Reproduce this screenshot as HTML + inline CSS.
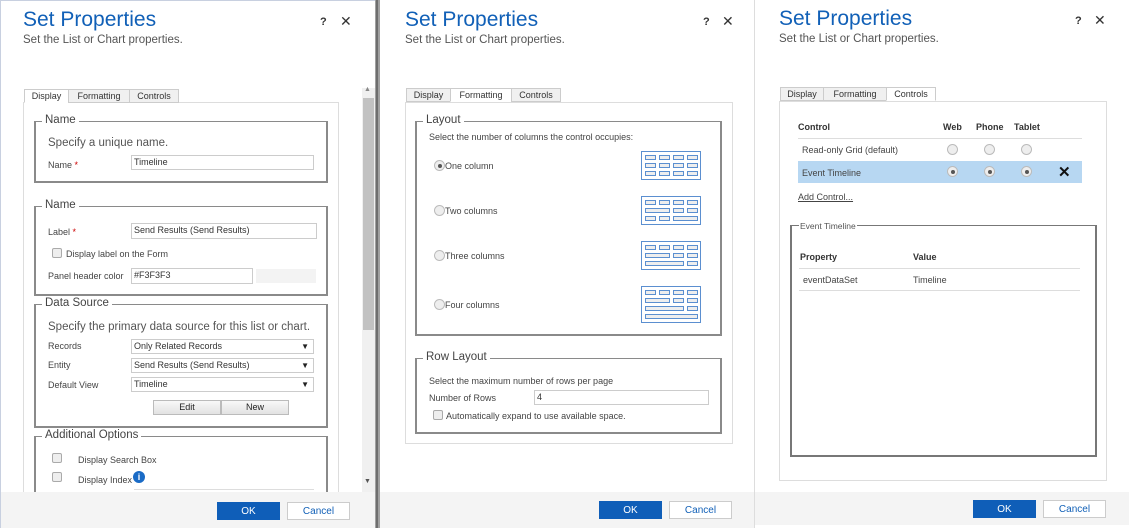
<!DOCTYPE html>
<html><head><meta charset="utf-8"><style>
*{box-sizing:border-box}
body{margin:0;width:1134px;height:528px;position:relative;overflow:hidden;background:#fff;font-family:"Liberation Sans",sans-serif;color:#444}
.a{position:absolute;white-space:nowrap}
.t{font-size:21px;color:#1160b7}
.st{font-size:11.5px;color:#555}
.hx{font-size:11px;color:#333;font-weight:bold}
.tab{position:absolute;height:14px;border:1px solid #ccc;background:#f0f0f0;font-size:9px;color:#333;text-align:center;line-height:12px}
.tab.on{background:#fff;border-bottom-color:#fff}
.box{position:absolute;border:1px solid #ddd;background:#fff}
.fs{position:absolute;border:2px solid #8a8a8a;border-top-width:1px;border-right-width:2px}
.lg{position:absolute;background:#fff;font-size:11.5px;color:#444;padding:0 3px;top:-8px;left:6px}
.s{font-size:9px;color:#444}
.m{font-size:11.5px;color:#555}
.in{position:absolute;border:1px solid #ccc;background:#fff;font-size:9px;color:#333;padding-left:2px;line-height:13px}
.sel::after{content:"▼";position:absolute;right:4px;top:0;font-size:8px;color:#222}
.cb{position:absolute;width:10px;height:10px;border:1px solid #aaa;border-radius:2px;background:#eee}
.rd{position:absolute;width:11px;height:11px;border:1px solid #bbb;border-radius:50%;background:#eee}
.rd.on::after{content:"";position:absolute;left:2.5px;top:2.5px;width:4px;height:4px;border-radius:50%;background:#555}
.foot{position:absolute;top:492px;height:36px;background:#f4f4f4}
.ok,.cn{position:absolute;height:18px;font-size:10px;display:flex;align-items:center;justify-content:center}
.ok{background:#0f5eb8;color:#fff}
.cn{background:#fff;border:1px solid #ccc;color:#1160b7}
.btn{position:absolute;height:15px;border:1px solid #bbb;background:linear-gradient(#f8f8f8,#e2e2e2);font-size:9px;text-align:center;line-height:13px;color:#222}
</style></head><body>
<!-- panel 1 -->
<div class="a" style="left:0;top:0;width:375px;height:1px;background:#c8d0e0"></div>
<div class="a" style="left:0;top:0;width:1px;height:528px;background:#c8d0e0"></div>
<div class="a t" style="left:23px;top:8px">Set Properties</div>
<div class="a st" style="left:23px;top:34px">Set the List or Chart properties.</div>
<div class="a hx" style="left:320px;top:16px">?</div>
<div class="a" style="left:340px;top:13px;font-size:14px;color:#333">✕</div>
<div class="box" style="left:23px;top:102px;width:316px;height:400px"></div>
<div class="tab on" style="left:24px;top:89px;width:45px">Display</div>
<div class="tab" style="left:68px;top:89px;width:62px">Formatting</div>
<div class="tab" style="left:129px;top:89px;width:50px">Controls</div>
<div class="fs" style="left:34px;top:121px;width:294px;height:62px"><span class="lg">Name</span></div>
<div class="a m" style="left:48px;top:137px">Specify a unique name.</div>
<div class="a s" style="left:48px;top:160px">Name <span style="color:#c00">*</span></div>
<div class="in" style="left:131px;top:155px;width:183px;height:15px">Timeline</div>
<div class="fs" style="left:34px;top:206px;width:294px;height:90px"><span class="lg">Name</span></div>
<div class="a s" style="left:48px;top:227px">Label <span style="color:#c00">*</span></div>
<div class="in" style="left:131px;top:223px;width:186px;height:16px">Send Results (Send Results)</div>
<div class="cb" style="left:52px;top:248px"></div>
<div class="a s" style="left:66px;top:249px">Display label on the Form</div>
<div class="a s" style="left:48px;top:271px">Panel header color</div>
<div class="in" style="left:131px;top:268px;width:122px;height:16px">#F3F3F3</div>
<div class="a" style="left:256px;top:269px;width:60px;height:14px;background:#f3f3f3"></div>
<div class="fs" style="left:34px;top:304px;width:294px;height:124px"><span class="lg">Data Source</span></div>
<div class="a m" style="left:48px;top:321px">Specify the primary data source for this list or chart.</div>
<div class="a s" style="left:48px;top:341px">Records</div>
<div class="in sel" style="left:131px;top:339px;width:183px;height:15px">Only Related Records</div>
<div class="a s" style="left:48px;top:360px">Entity</div>
<div class="in sel" style="left:131px;top:358px;width:183px;height:15px">Send Results (Send Results)</div>
<div class="a s" style="left:48px;top:380px">Default View</div>
<div class="in sel" style="left:131px;top:377px;width:183px;height:15px">Timeline</div>
<div class="btn" style="left:153px;top:400px;width:68px">Edit</div>
<div class="btn" style="left:221px;top:400px;width:68px">New</div>
<div class="fs" style="left:34px;top:436px;width:294px;height:70px"><span class="lg">Additional Options</span></div>
<div class="cb" style="left:52px;top:453px"></div>
<div class="a s" style="left:78px;top:455px">Display Search Box</div>
<div class="cb" style="left:52px;top:472px"></div>
<div class="a s" style="left:78px;top:475px">Display Index</div>
<div class="a" style="left:133px;top:471px;width:12px;height:12px;border-radius:50%;background:#1a6bc6;color:#fff;font-size:9px;font-weight:bold;text-align:center;line-height:12px">i</div>
<div class="a" style="left:134px;top:489px;width:180px;height:1px;background:#ddd"></div>
<div class="a" style="left:362px;top:88px;width:13px;height:404px;background:#f0f0f0"></div>
<div class="a" style="left:363px;top:98px;width:11px;height:232px;background:#c2c2c2"></div>
<div class="a" style="left:364px;top:86px;font-size:7px;color:#888">▲</div>
<div class="a" style="left:364px;top:478px;font-size:7px;color:#555">▼</div>
<div class="foot" style="left:1px;width:374px"></div>
<div class="ok" style="left:217px;top:502px;width:63px">OK</div>
<div class="cn" style="left:287px;top:502px;width:63px">Cancel</div>
<!-- divider -->
<div class="a" style="left:375px;top:0;width:5px;height:528px;background:#a0a0a0"></div>
<div class="a" style="left:376px;top:0;width:2px;height:528px;background:#6e6e6e"></div>
<!-- panel 2 -->
<div class="a t" style="left:405px;top:8px">Set Properties</div>
<div class="a st" style="left:405px;top:34px">Set the List or Chart properties.</div>
<div class="a hx" style="left:703px;top:16px">?</div>
<div class="a" style="left:722px;top:13px;font-size:14px;color:#333">✕</div>
<div class="box" style="left:405px;top:102px;width:328px;height:342px"></div>
<div class="tab" style="left:406px;top:88px;width:45px">Display</div>
<div class="tab on" style="left:450px;top:88px;width:62px">Formatting</div>
<div class="tab" style="left:511px;top:88px;width:50px">Controls</div>
<div class="fs" style="left:415px;top:121px;width:307px;height:215px"><span class="lg">Layout</span></div>
<div class="a s" style="left:429px;top:132px">Select the number of columns the control occupies:</div>
<div class="rd on" style="left:434px;top:160px"></div><div class="a s" style="left:445px;top:161px">One column</div>
<div class="rd" style="left:434px;top:205px"></div><div class="a s" style="left:445px;top:206px">Two columns</div>
<div class="rd" style="left:434px;top:250px"></div><div class="a s" style="left:445px;top:251px">Three columns</div>
<div class="rd" style="left:434px;top:299px"></div><div class="a s" style="left:445px;top:300px">Four columns</div>
<svg class="a" style="left:641px;top:151px" width="60" height="172" viewBox="0 0 60 172" fill="none" stroke="#5b8fd0" stroke-width="1">
<rect x="0.5" y="0.5" width="59" height="28"/>
<g fill="#eee"><rect x="4.5" y="4.5" width="10" height="4"/><rect x="18.5" y="4.5" width="10" height="4"/><rect x="32.5" y="4.5" width="10" height="4"/><rect x="46.5" y="4.5" width="10" height="4"/>
<rect x="4.5" y="12.5" width="10" height="4"/><rect x="18.5" y="12.5" width="10" height="4"/><rect x="32.5" y="12.5" width="10" height="4"/><rect x="46.5" y="12.5" width="10" height="4"/>
<rect x="4.5" y="20.5" width="10" height="4"/><rect x="18.5" y="20.5" width="10" height="4"/><rect x="32.5" y="20.5" width="10" height="4"/><rect x="46.5" y="20.5" width="10" height="4"/></g>
<rect x="0.5" y="45.5" width="59" height="28"/>
<g fill="#eee"><rect x="4.5" y="49.5" width="10" height="4"/><rect x="18.5" y="49.5" width="10" height="4"/><rect x="32.5" y="49.5" width="10" height="4"/><rect x="46.5" y="49.5" width="10" height="4"/>
<rect x="4.5" y="57.5" width="24" height="4"/><rect x="32.5" y="57.5" width="10" height="4"/><rect x="46.5" y="57.5" width="10" height="4"/>
<rect x="4.5" y="65.5" width="10" height="4"/><rect x="18.5" y="65.5" width="10" height="4"/><rect x="32.5" y="65.5" width="24" height="4"/></g>
<rect x="0.5" y="90.5" width="59" height="28"/>
<g fill="#eee"><rect x="4.5" y="94.5" width="10" height="4"/><rect x="18.5" y="94.5" width="10" height="4"/><rect x="32.5" y="94.5" width="10" height="4"/><rect x="46.5" y="94.5" width="10" height="4"/>
<rect x="4.5" y="102.5" width="24" height="4"/><rect x="32.5" y="102.5" width="10" height="4"/><rect x="46.5" y="102.5" width="10" height="4"/>
<rect x="4.5" y="110.5" width="38" height="4"/><rect x="46.5" y="110.5" width="10" height="4"/></g>
<rect x="0.5" y="135.5" width="59" height="36"/>
<g fill="#eee"><rect x="4.5" y="139.5" width="10" height="4"/><rect x="18.5" y="139.5" width="10" height="4"/><rect x="32.5" y="139.5" width="10" height="4"/><rect x="46.5" y="139.5" width="10" height="4"/>
<rect x="4.5" y="147.5" width="24" height="4"/><rect x="32.5" y="147.5" width="10" height="4"/><rect x="46.5" y="147.5" width="10" height="4"/>
<rect x="4.5" y="155.5" width="38" height="4"/><rect x="46.5" y="155.5" width="10" height="4"/>
<rect x="4.5" y="163.5" width="52" height="4"/></g>
</svg>
<div class="fs" style="left:415px;top:358px;width:307px;height:76px"><span class="lg">Row Layout</span></div>
<div class="a s" style="left:429px;top:376px">Select the maximum number of rows per page</div>
<div class="a s" style="left:429px;top:393px">Number of Rows</div>
<div class="in" style="left:534px;top:390px;width:175px;height:15px">4</div>
<div class="cb" style="left:433px;top:410px"></div>
<div class="a s" style="left:446px;top:411px">Automatically expand to use available space.</div>
<div class="foot" style="left:380px;width:375px"></div>
<div class="ok" style="left:599px;top:501px;width:63px">OK</div>
<div class="cn" style="left:669px;top:501px;width:63px">Cancel</div>
<!-- panel 3 -->
<div class="a" style="left:754px;top:0;width:1px;height:528px;background:#ddd"></div>
<div class="a t" style="left:779px;top:7px">Set Properties</div>
<div class="a st" style="left:779px;top:33px">Set the List or Chart properties.</div>
<div class="a hx" style="left:1075px;top:15px">?</div>
<div class="a" style="left:1094px;top:12px;font-size:14px;color:#333">✕</div>
<div class="box" style="left:779px;top:101px;width:328px;height:380px"></div>
<div class="tab" style="left:780px;top:87px;width:44px">Display</div>
<div class="tab" style="left:823px;top:87px;width:64px">Formatting</div>
<div class="tab on" style="left:886px;top:87px;width:50px">Controls</div>
<div class="a s" style="left:798px;top:122px;font-weight:bold;color:#333">Control</div>
<div class="a s" style="left:943px;top:122px;font-weight:bold;color:#333">Web</div>
<div class="a s" style="left:976px;top:122px;font-weight:bold;color:#333">Phone</div>
<div class="a s" style="left:1014px;top:122px;font-weight:bold;color:#333">Tablet</div>
<div class="a" style="left:798px;top:138px;width:284px;height:1px;background:#ddd"></div>
<div class="a s" style="left:802px;top:145px">Read-only Grid (default)</div>
<div class="rd" style="left:947px;top:144px"></div><div class="rd" style="left:984px;top:144px"></div><div class="rd" style="left:1021px;top:144px"></div>
<div class="a" style="left:798px;top:161px;width:284px;height:22px;background:#b7d7f2"></div>
<div class="a s" style="left:802px;top:168px">Event Timeline</div>
<div class="rd on" style="left:947px;top:166px"></div><div class="rd on" style="left:984px;top:166px"></div><div class="rd on" style="left:1021px;top:166px"></div>
<div class="a" style="left:1058px;top:163px;font-size:15px;font-weight:bold;color:#111">✕</div>
<div class="a s" style="left:798px;top:192px;text-decoration:underline">Add Control...</div>
<div class="a" style="left:790px;top:225px;width:307px;height:232px;border:2px solid #777;border-top-width:1px"></div>
<div class="a" style="left:799px;top:221px;background:#fff;font-size:8.5px;color:#555;padding:0 1px">Event Timeline</div>
<div class="a s" style="left:800px;top:252px;font-weight:bold;color:#333">Property</div>
<div class="a s" style="left:913px;top:252px;font-weight:bold;color:#333">Value</div>
<div class="a" style="left:799px;top:268px;width:281px;height:1px;background:#ddd"></div>
<div class="a s" style="left:803px;top:275px">eventDataSet</div>
<div class="a s" style="left:913px;top:275px">Timeline</div>
<div class="a" style="left:799px;top:290px;width:281px;height:1px;background:#ddd"></div>
<div class="foot" style="left:755px;width:374px;height:33px"></div>
<div class="ok" style="left:973px;top:500px;width:63px">OK</div>
<div class="cn" style="left:1043px;top:500px;width:63px">Cancel</div>
</body></html>
